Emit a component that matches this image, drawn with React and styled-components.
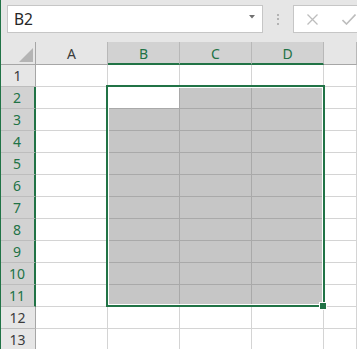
import React from 'react';
import styled, { createGlobalStyle, css } from 'styled-components';

const GREEN = '#217346';

const GlobalStyle = createGlobalStyle`
  html, body {
    margin: 0;
    padding: 0;
    background: #fff;
  }
  body {
    font-family: "Noto Sans", "Open Sans", sans-serif;
  }
`;

const Window = styled.div`
  width: 357px;
  height: 349px;
  box-sizing: border-box;
  border-left: 1px solid ${GREEN};
  background: #e6e6e6;
  display: flex;
  flex-direction: column;
  overflow: hidden;
`;

const FormulaBar = styled.div`
  height: 42px;
  flex: none;
  box-sizing: border-box;
  display: flex;
  align-items: flex-start;
  padding: 5px 0 0 6px;

  & > * {
    flex: none;
  }
`;

const NameBox = styled.div`
  width: 256px;
  height: 28px;
  box-sizing: border-box;
  border: 1px solid #c6c6c6;
  background: #fff;
  display: flex;
  align-items: center;
  justify-content: space-between;
  padding: 0 7px 0 6px;
  font-size: 15.5px;
  color: #262626;
`;

const Caret = styled.svg`
  align-self: flex-start;
  margin-top: 9px;
`;

const Grip = styled.div`
  width: 30px;
  height: 28px;
  display: flex;
  flex-direction: column;
  align-items: center;
  justify-content: center;
  gap: 2.5px;

  span {
    width: 2px;
    height: 2px;
    background: #b3b3b3;
  }
`;

const EntryBox = styled.div`
  width: 120px;
  height: 28px;
  box-sizing: border-box;
  border: 1px solid #c6c6c6;
  background: #fff;
  display: flex;
  align-items: center;
  padding-left: 13px;
  gap: 24px;
`;

const Sheet = styled.div`
  flex: 1;
  display: grid;
  grid-template-columns: 35px repeat(4, 72px) 1fr;
  grid-template-rows: 23px;
  grid-auto-rows: 22px;
  background: #fff;
  font-size: 14px;
`;

const placed = css`
  grid-row: ${(p) => p.$row};
  grid-column: ${(p) => p.$col};
`;

const Corner = styled.div`
  ${placed}
  background: #e6e6e6;
  box-sizing: border-box;
  border-right: 1px solid #a6a6a6;
  border-bottom: 1px solid #a6a6a6;
  display: flex;
  align-items: flex-end;
  justify-content: flex-end;
  padding: 0 2px 2px 0;
`;

const ColHead = styled.div`
  ${placed}
  box-sizing: border-box;
  background: ${(p) => (p.$selected ? '#d2d2d2' : '#e6e6e6')};
  color: ${(p) => (p.$selected ? GREEN : '#3c3c3c')};
  border-right: 1px solid #b8b8b8;
  border-bottom: ${(p) => (p.$selected ? `2px solid ${GREEN}` : '1px solid #a6a6a6')};
  display: flex;
  align-items: center;
  justify-content: center;
  padding-top: ${(p) => (p.$selected ? '1px' : '0')};
`;

const RowHead = styled.div`
  ${placed}
  box-sizing: border-box;
  background: ${(p) => (p.$selected ? '#d2d2d2' : '#e6e6e6')};
  color: ${(p) => (p.$selected ? GREEN : '#3c3c3c')};
  border-bottom: 1px solid #bdbdbd;
  border-right: ${(p) => (p.$selected ? `2px solid ${GREEN}` : '1px solid #a6a6a6')};
  display: flex;
  align-items: center;
  justify-content: center;
  padding-right: 1px;
`;

const Cell = styled.div`
  ${placed}
  box-sizing: border-box;
  border-right: 1px solid #d4d4d4;
  border-bottom: 1px solid #d4d4d4;
  ${(p) =>
    p.$inRange &&
    css`
      border-color: #a9a9a9;
    `}
  ${(p) =>
    p.$inRange &&
    !p.$active &&
    css`
      background: #c6c6c6;
    `}
`;

const Selection = styled.div`
  grid-column: 3 / 6;
  grid-row: 3 / 13;
  margin: -2px -1px 0 -2px;
  position: relative;
  z-index: 1;
  border: 2px solid ${GREEN};
  box-shadow: inset 0 0 0 1px #fff;
  pointer-events: none;
`;

const FillHandle = styled.div`
  position: absolute;
  right: -4px;
  bottom: -5px;
  width: 6px;
  height: 6px;
  background: ${GREEN};
  border: 1px solid #fff;
`;

const columns = ['A', 'B', 'C', 'D', ''];
const rowCount = 13;

const isColSelected = (c) => c >= 1 && c <= 3;
const isRowSelected = (r) => r >= 2 && r <= 11;

export default function App() {
  const rows = Array.from({ length: rowCount }, (_, i) => i + 1);

  return (
    <>
      <GlobalStyle />
      <Window>
        <FormulaBar>
          <NameBox>
            <span>B2</span>
            <Caret width="6" height="4" viewBox="0 0 6 4">
              <path d="M0 0h6L3 3.5z" fill="#707070" />
            </Caret>
          </NameBox>
          <Grip>
            <span />
            <span />
            <span />
          </Grip>
          <EntryBox>
            <svg width="11" height="11" viewBox="0 0 11 11">
              <path d="M0.5 0.5l10 10M10.5 0.5l-10 10" stroke="#bdbdbd" strokeWidth="1.3" fill="none" />
            </svg>
            <svg width="14" height="11" viewBox="0 0 14 11">
              <path d="M0.5 6l4 4L13.5 0.5" stroke="#bdbdbd" strokeWidth="1.6" fill="none" />
            </svg>
          </EntryBox>
        </FormulaBar>

        <Sheet>
          <Corner $row={1} $col={1}>
            <svg width="14" height="14" viewBox="0 0 14 14">
              <path d="M14 0V14H0z" fill="#b4b4b4" />
            </svg>
          </Corner>
          {columns.map((c, i) => (
            <ColHead key={`h${i}`} $row={1} $col={i + 2} $selected={isColSelected(i)}>
              {c}
            </ColHead>
          ))}
          {rows.map((r) => (
            <React.Fragment key={r}>
              <RowHead $row={r + 1} $col={1} $selected={isRowSelected(r)}>
                {r}
              </RowHead>
              {columns.map((c, i) => (
                <Cell
                  key={`${r}-${i}`}
                  $row={r + 1}
                  $col={i + 2}
                  $inRange={isRowSelected(r) && isColSelected(i)}
                  $active={r === 2 && i === 1}
                />
              ))}
            </React.Fragment>
          ))}
          <Selection>
            <FillHandle />
          </Selection>
        </Sheet>
      </Window>
    </>
  );
}
